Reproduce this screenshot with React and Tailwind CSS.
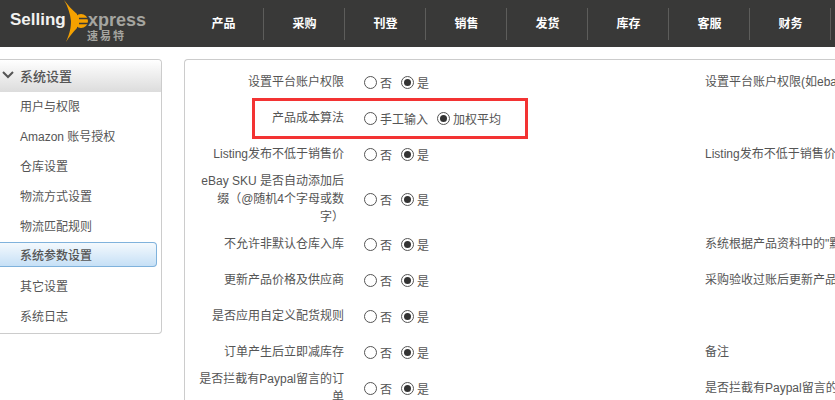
const navItems = ['产品', '采购', '刊登', '销售', '发货', '库存', '客服', '财务'];

const menuItems = ['用户与权限', 'Amazon 账号授权', '仓库设置', '物流方式设置', '物流匹配规则', '系统参数设置', '其它设置', '系统日志'];

const settings = [
  { label: '设置平台账户权限', note: '设置平台账户权限(如ebay账号)' },
  { label: '产品成本算法', options: ['手工输入', '加权平均'] },
  { label: 'Listing发布不低于销售价', note: 'Listing发布不低于销售价格' },
  { label: 'eBay SKU 是否自动添加后\n缀（@随机4个字母或数\n字）', tall: true },
  { label: '不允许非默认仓库入库', note: '系统根据产品资料中的"默认仓库"' },
  { label: '更新产品价格及供应商', note: '采购验收过账后更新产品价格' },
  { label: '是否应用自定义配货规则' },
  { label: '订单产生后立即减库存', note: '备注' },
  { label: '是否拦截有Paypal留言的订单', note: '是否拦截有Paypal留言的订单' },
];

const Radio = ({ checked, label, className = '' }) => (
  <span className={`flex items-center ${className}`}>
    <span className="flex h-[13px] w-[13px] shrink-0 -translate-y-px items-center justify-center rounded-full border border-[#555] bg-white">
      {checked && <span className="h-[7px] w-[7px] rounded-full bg-[#333]" />}
    </span>
    <span className="ml-[3px] translate-y-px">{label}</span>
  </span>
);

const Logo = () => (
  <div className="relative h-[47px] w-[183px] shrink-0 overflow-hidden">
    <span className="absolute left-[10px] top-[10px] font-['Liberation_Sans',sans-serif] text-[17px] font-bold leading-[20px] text-[#f2f2f0]">
      Selling
    </span>
    <svg className="absolute left-[62px] top-0" width="28" height="47" viewBox="0 0 28 47">
      <path d="M2 0 C6 5 10 10 15 14 L15 28 C11 32 7 37 4 42 C8 33 9 27 9 21 C8 13 6 7 2 0 Z" fill="#f5a100" />
      <circle cx="19" cy="21" r="7" fill="#f5a100" />
      <path d="M17 18.5 L27 18.5 M17 23.5 L27 23.5" stroke="#393938" strokeWidth="1.5" fill="none" />
    </svg>
    <span className="absolute left-[88px] top-[10px] font-['Liberation_Sans',sans-serif] text-[18px] font-bold leading-[20px] text-[#a5a5a0]">
      xpress
    </span>
    <span className="absolute left-[87px] top-[30px] text-[11px] font-bold leading-[13px] tracking-[2px] text-[#a5a5a0]">
      速易特
    </span>
  </div>
);

export default function App() {
  return (
    <div className="relative h-[400px] w-[835px] overflow-hidden bg-white font-['Liberation_Sans','Noto_Sans_CJK_SC',sans-serif] text-xs text-[#555]">
      {/* Header */}
      <header className="flex h-[47px] items-center bg-[#393938]">
        <Logo />
        <nav className="flex">
          {navItems.map((item) => (
            <a key={item} className="flex h-[32px] w-[81px] shrink-0 items-center justify-center border-r border-[#5d5d5b] pl-px font-bold text-white">
              {item}
            </a>
          ))}
        </nav>
      </header>

      <div className="flex pt-3">
        {/* Sidebar */}
        <aside className="h-[275px] w-[162px] shrink-0 rounded-r border border-l-0 border-[#ccc]">
          <div className="flex h-[32px] items-center rounded-tr bg-gradient-to-b from-white to-[#dcdcdc]">
            <svg className="ml-[2px] -translate-y-px" width="12" height="8" viewBox="0 0 12 8" fill="none">
              <path d="M1 1 L6 6 L11 1" stroke="#555" strokeWidth="2" />
            </svg>
            <span className="ml-[6px] translate-y-px text-[13px] font-medium text-[#555]">系统设置</span>
          </div>
          <ul>
            {menuItems.map((item, i) =>
              i === 5 ? (
                <li key={item} className="h-[30px]">
                  <span className="flex h-[25px] w-[157px] items-center rounded-r border border-l-0 border-[#7fb2dc] bg-gradient-to-b from-[#f4f9fd] to-[#c6e0f6] pl-5 pt-[3px] font-medium">
                    {item}
                  </span>
                </li>
              ) : (
                <li key={item} className="flex h-[30px] items-center pl-5">
                  {item}
                </li>
              )
            )}
          </ul>
        </aside>

        {/* Settings panel */}
        <main className="ml-[22px] h-[360px] flex-1 rounded-tl border-l border-t border-[#ccc] pt-1">
          {settings.map((s) => (
            <div key={s.label} className={`flex items-center ${s.tall ? 'h-[54px]' : 'h-[36px]'}`}>
              <label className="ml-[13px] w-[146px] shrink-0 whitespace-pre-line text-right leading-[18px]">{s.label}</label>
              <div className="ml-5 flex w-[341px] shrink-0 translate-y-px">
                {s.options ? (
                  <>
                    <Radio label={s.options[0]} />
                    <Radio label={s.options[1]} checked className="ml-[9px]" />
                  </>
                ) : (
                  <>
                    <Radio label="否" />
                    <Radio label="是" checked className="ml-[9px]" />
                  </>
                )}
              </div>
              {s.note && <span className="whitespace-nowrap">{s.note}</span>}
            </div>
          ))}
        </main>
      </div>

      {/* Red highlight annotation */}
      <div className="absolute left-[252px] top-[98px] h-[41px] w-[276px] border-[3px] border-[#f33333]" />
    </div>
  );
}
